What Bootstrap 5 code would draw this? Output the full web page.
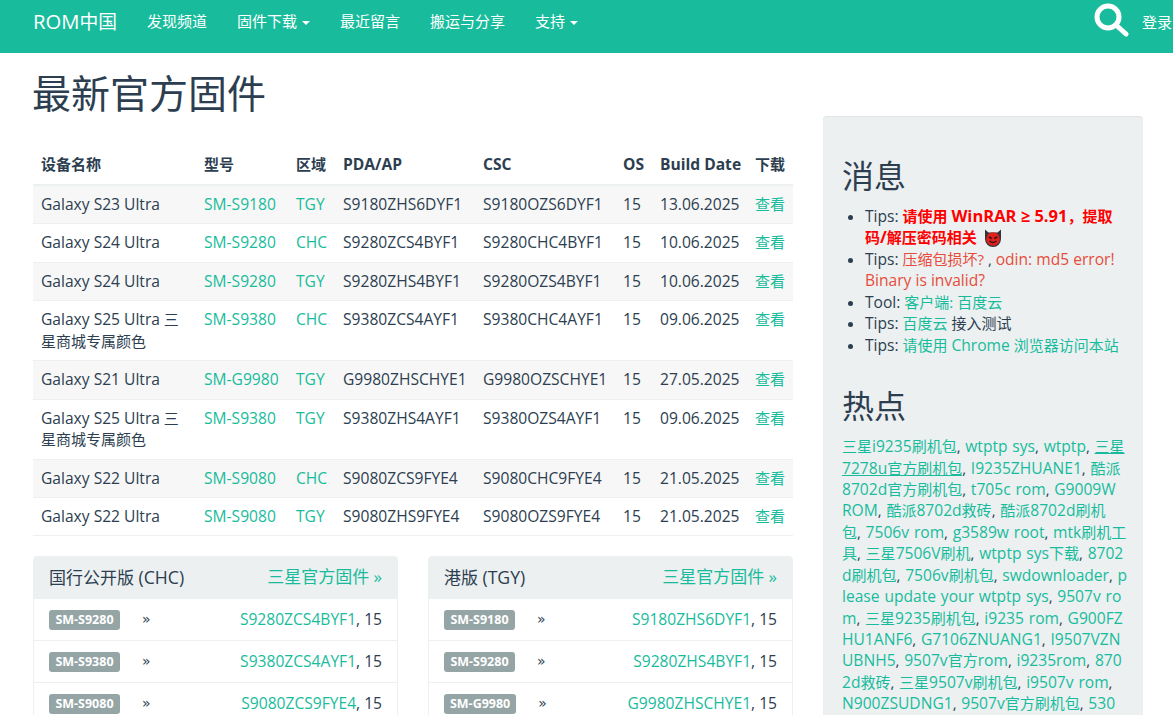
<!DOCTYPE html>
<html lang="zh-CN">
<head>
    <meta charset="UTF-8">
    <meta name="viewport" content="width=device-width, initial-scale=1.0">
    <title>ROM中国 - 最新官方固件</title>
    <link href="https://cdn.jsdelivr.net/npm/bootstrap@5.3.0/dist/css/bootstrap.min.css" rel="stylesheet">
    <style>
        html, body { height: 715px; overflow: hidden; }
        body { font-family: "Open Sans", "Noto Sans CJK SC", sans-serif; font-size: 15px; line-height: 21.43px; color: #2c3e50; background: #fff; }
        a { color: #18bc9c; text-decoration: none; }
        .latin-run { font-size: 1.04em; }
        .top-bar { background: #18bc9c; height: 53px; padding: 0 0 10px 33px; flex-wrap: nowrap; }
        .top-bar .navbar-brand { color: #fff; font-size: 18.75px; padding: 0; margin: 0 30px 0 0; }
        .top-bar .navbar-brand .latin-run { font-size: 1.08em; }
        .top-bar .nav-link { color: #fff; padding: 0; margin-right: 30px; font-size: 15px; }
        .top-bar .dropdown-toggle::after { vertical-align: 2px; margin-left: 5px; border-width: 4px 4px 0; }
        .search-ico { position: absolute; left: 1093px; top: 2px; }
        .login-link { position: absolute; left: 1142px; top: 12px; color: #fff; white-space: nowrap; }
        .page-wrap { padding: 0 30px 0 33px; gap: 30px; }
        .main-col { width: 760px; flex: none; }
        .side-col { width: 320px; flex: none; margin-top: 63px; background: #ecf0f1; border-radius: 4px; padding: 19px; box-shadow: inset 0 1px 1px rgba(0,0,0,.05); height: 800px; }
        .side-col .latin-run { line-height: 1; }
        .page-title { font-size: 39px; line-height: 43px; font-weight: 400; margin: 18px 0 31px -1px; }
        .fw-table { margin-bottom: 20px; table-layout: fixed; --bs-table-color: #2c3e50; --bs-table-striped-color: #2c3e50; --bs-table-striped-bg: #f7f7f7; }
        .fw-table th, .fw-table td { padding: 8px; border-bottom: 1px solid #ecf0f1; white-space: nowrap; }
        .fw-table thead th { border-bottom: 2px solid #ecf0f1; height: 40px; padding: 7px 8px 9px; font-weight: 700; }
        .fw-table td.wrap-name { white-space: normal; }
        .panel-box { border: 1px solid #ecf0f1; border-radius: 4px; width: 365px; --bs-card-border-color: #ecf0f1; }
        .panel-head { background: #ecf0f1; padding: 9px 15px; font-size: 17px; height: 41px; line-height: 22px; }
        .panel-row { padding: 0 15px; height: 42px; border-top: 1px solid #ecf0f1; }
        .panel-row:first-of-type { border-top: 0; }
        .model-tag { background: #95a5a6; color: #fff; font-size: 12px; font-weight: 700; border-radius: 3px; padding: 0 6px; line-height: 20px; min-width: 71px; text-align: center; white-space: nowrap; margin-right: 22px; }
        .chevrons { font-family: "DejaVu Sans", sans-serif; font-size: 14px; }
        .side-title { font-size: 32px; line-height: 35px; font-weight: 400; margin: 23px 0 13px; }
        .side-list { padding-left: 31px; margin: 0 0 32px; margin-left: -8px; }
        .text-alert { color: #e74c3c; }
        .text-strong-red { color: #f00; font-weight: 700; }
        .text-strong-red .latin-run { font-size: 1.1em; }
        .hot-text { white-space: nowrap; word-spacing: .8px; margin: 0; }
        .hot-text u { text-decoration: underline; }
        .devil-ico { vertical-align: -4px; margin-left: 3px; }
    </style>
</head>
<body>
    <nav class="navbar top-bar d-flex align-items-center justify-content-start position-relative">
        <a class="navbar-brand" href="#">ROM中国</a>
        <a class="nav-link" href="#">发现频道</a>
        <a class="nav-link dropdown-toggle" href="#">固件下载</a>
        <a class="nav-link" href="#">最近留言</a>
        <a class="nav-link" href="#">搬运与分享</a>
        <a class="nav-link dropdown-toggle" href="#">支持</a>
        <svg class="search-ico" width="36" height="36" viewBox="0 0 36 36"><circle cx="15" cy="15" r="11" fill="none" stroke="#fff" stroke-width="5"/><path d="M23 23l10 9" stroke="#fff" stroke-width="5" stroke-linecap="round"/></svg>
        <a class="login-link" href="#">登录</a>
    </nav>

    <div class="d-flex page-wrap">
        <div class="main-col">
            <h1 class="page-title">最新官方固件</h1>
            <table class="table table-striped fw-table" id="fwTable">
                <colgroup>
                    <col style="width:163px"><col style="width:92px"><col style="width:47px"><col style="width:140px"><col style="width:140px"><col style="width:37px"><col style="width:95px"><col style="width:46px">
                </colgroup>
                <thead>
                    <tr><th>设备名称</th><th>型号</th><th>区域</th><th>PDA/AP</th><th>CSC</th><th>OS</th><th>Build Date</th><th>下载</th></tr>
                </thead>
                <tbody id="fwRows"></tbody>
            </table>
            <div class="d-flex justify-content-between">
                <div class="card panel-box" id="panelChc"></div>
                <div class="card panel-box" id="panelTgy"></div>
            </div>
        </div>
        <div class="side-col">
            <h2 class="side-title">消息</h2>
            <ul class="side-list">
                <li>Tips: <span class="text-strong-red">请使用 WinRAR ≥ 5.91，提取码/解压密码相关</span>
                    <svg class="devil-ico" width="18" height="18" viewBox="0 0 18 18"><path d="M1 0.500l3.500 3h9l3.500-3v9.500a8 8 0 0 1-16 0z" fill="#33343a"/><circle cx="9" cy="10" r="6.800" fill="#e0201c"/><path d="M4.800 8l3 1.500M13.200 8l-3 1.500M5.500 12q3.500 3 7 0" stroke="#3a1010" stroke-width="1.400" fill="none"/></svg></li>
                <li>Tips: <a class="text-alert" href="#">压缩包损坏?</a> , <a class="text-alert" href="#">odin: md5 error! Binary is invalid?</a></li>
                <li>Tool: <a href="#">客户端: 百度云</a></li>
                <li>Tips: <a href="#">百度云</a> 接入测试</li>
                <li>Tips: <a href="#">请使用 Chrome 浏览器访问本站</a></li>
            </ul>
            <h2 class="side-title">热点</h2>
            <p class="hot-text" id="hotText"></p>
        </div>
    </div>

    <script src="https://cdn.jsdelivr.net/npm/bootstrap@5.3.0/dist/js/bootstrap.bundle.min.js"></script>
    <script>
        // 固件列表
        const rows = [
            ['Galaxy S23 Ultra', 'SM-S9180', 'TGY', 'S9180ZHS6DYF1', 'S9180OZS6DYF1', '15', '13.06.2025'],
            ['Galaxy S24 Ultra', 'SM-S9280', 'CHC', 'S9280ZCS4BYF1', 'S9280CHC4BYF1', '15', '10.06.2025'],
            ['Galaxy S24 Ultra', 'SM-S9280', 'TGY', 'S9280ZHS4BYF1', 'S9280OZS4BYF1', '15', '10.06.2025'],
            ['Galaxy S25 Ultra 三星商城专属颜色', 'SM-S9380', 'CHC', 'S9380ZCS4AYF1', 'S9380CHC4AYF1', '15', '09.06.2025'],
            ['Galaxy S21 Ultra', 'SM-G9980', 'TGY', 'G9980ZHSCHYE1', 'G9980OZSCHYE1', '15', '27.05.2025'],
            ['Galaxy S25 Ultra 三星商城专属颜色', 'SM-S9380', 'TGY', 'S9380ZHS4AYF1', 'S9380OZS4AYF1', '15', '09.06.2025'],
            ['Galaxy S22 Ultra', 'SM-S9080', 'CHC', 'S9080ZCS9FYE4', 'S9080CHC9FYE4', '15', '21.05.2025'],
            ['Galaxy S22 Ultra', 'SM-S9080', 'TGY', 'S9080ZHS9FYE4', 'S9080OZS9FYE4', '15', '21.05.2025']
        ];
        document.getElementById('fwRows').innerHTML = rows.map(r => `
            <tr>
                <td class="wrap-name">${r[0]}</td>
                <td><a href="#">${r[1]}</a></td>
                <td><a href="#">${r[2]}</a></td>
                <td>${r[3]}</td>
                <td>${r[4]}</td>
                <td>${r[5]}</td>
                <td>${r[6]}</td>
                <td><a href="#">查看</a></td>
            </tr>`).join('');

        function renderPanel(id, title, items) {
            document.getElementById(id).innerHTML = `
                <div class="panel-head d-flex justify-content-between"><span>${title}</span><a href="#">三星官方固件 »</a></div>
                ${items.map(i => `
                <div class="panel-row d-flex align-items-center">
                    <span class="model-tag">${i[0]}</span><span class="chevrons">»</span>
                    <span class="ms-auto"><a href="#">${i[1]}</a>, 15</span>
                </div>`).join('')}`;
        }
        renderPanel('panelChc', '国行公开版 (CHC)', [['SM-S9280', 'S9280ZCS4BYF1'], ['SM-S9380', 'S9380ZCS4AYF1'], ['SM-S9080', 'S9080ZCS9FYE4']]);
        renderPanel('panelTgy', '港版 (TGY)', [['SM-S9180', 'S9180ZHS6DYF1'], ['SM-S9280', 'S9280ZHS4BYF1'], ['SM-G9980', 'G9980ZHSCHYE1']]);

        // 热点 (| 是原图的换行位置)
        const hot = ['三星i9235刷机包', 'wtptp sys', 'wtptp', '<u>三星|7278u官方刷机包</u>', 'I9235ZHUANE1', '酷派|8702d官方刷机包', 't705c rom', 'G9009W|ROM', '酷派8702d救砖', '酷派8702d刷机|包', '7506v rom', 'g3589w root', 'mtk刷机工|具', '三星7506V刷机', 'wtptp sys下载', '8702|d刷机包', '7506v刷机包', 'swdownloader', 'p|lease update your wtptp sys', '9507v ro|m', '三星9235刷机包', 'i9235 rom', 'G900FZ|HU1ANF6', 'G7106ZNUANG1', 'I9507VZN|UBNH5', '9507v官方rom', 'i9235rom', '870|2d救砖', '三星9507v刷机包', 'i9507v rom', '|N900ZSUDNG1', '9507v官方刷机包', '530'];
        document.getElementById('hotText').innerHTML = hot.map(h => `<a href="#">${h.replace(/\|/g, '<br>')}</a>`).join(', ');

        // 拉丁字符略放大，贴近原图的字宽
        function wrapLatin(root) {
            const walker = document.createTreeWalker(root, NodeFilter.SHOW_TEXT);
            const nodes = [];
            while (walker.nextNode()) nodes.push(walker.currentNode);
            nodes.forEach(node => {
                if (['SCRIPT', 'STYLE', 'TITLE'].includes(node.parentNode.tagName)) return;
                if (!/[A-Za-z0-9]/.test(node.nodeValue)) return;
                const holder = document.createElement('span');
                holder.innerHTML = node.nodeValue.replace(/[\x21-\x7e≥»]+(?: +[\x21-\x7e≥»]+)*/g, '<span class="latin-run">$&</span>');
                node.replaceWith(...holder.childNodes);
            });
        }
        wrapLatin(document.body);
    </script>
</body>
</html>
